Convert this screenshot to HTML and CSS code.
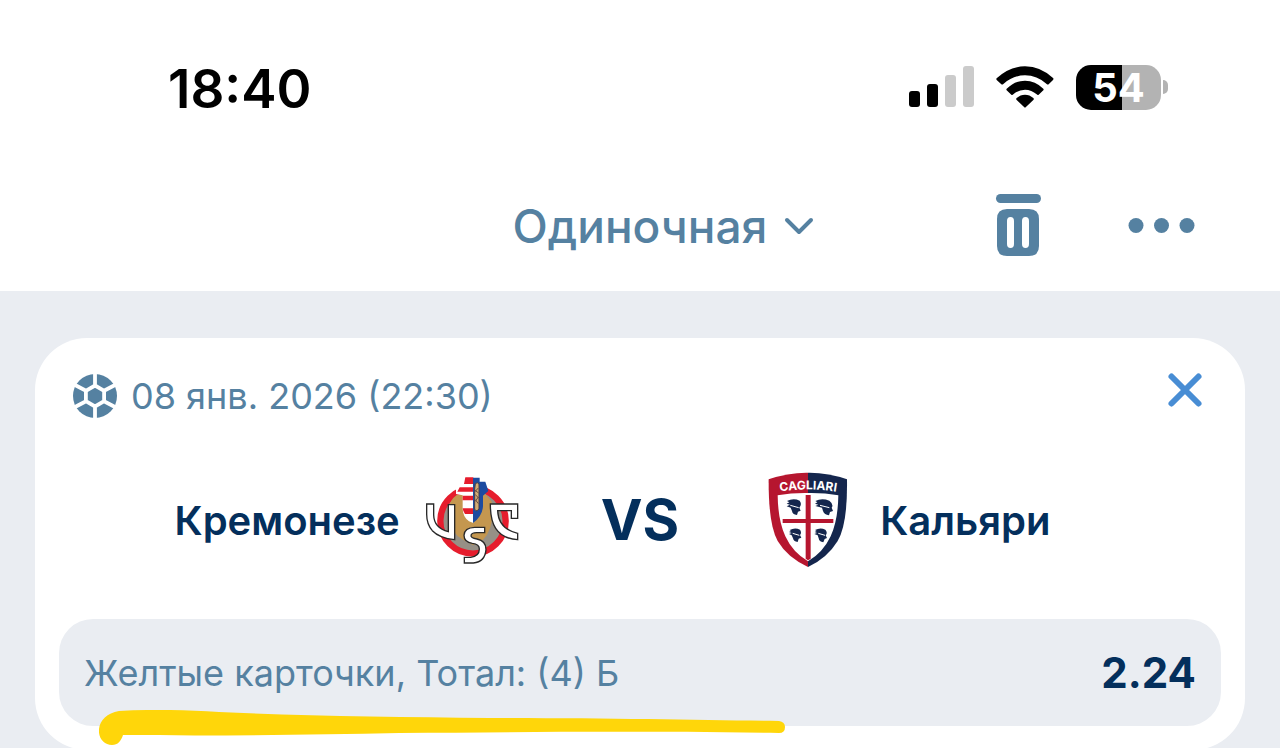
FILE: index.html
```html
<!DOCTYPE html>
<html lang="ru">
<head>
  <meta charset="UTF-8" />
  <meta name="viewport" content="width=device-width, initial-scale=1.0"/>
  <title>Купон</title>
  <link rel="stylesheet" href="styles.css">
</head>
<body>
  <div class="status-bar">
    <time class="clock">18:40</time>
    <div class="status-icons">
      <svg class="signal" width="66" height="42" viewBox="0 0 66 42">
        <rect x="1" y="25" width="11" height="16" rx="3"/>
        <rect x="19" y="18" width="11" height="23" rx="3"/>
        <rect x="37" y="9" width="11" height="32" rx="3" fill="#cbcbcb"/>
        <rect x="55" y="0" width="11" height="41" rx="3" fill="#cbcbcb"/>
      </svg>
      <svg class="wifi" width="58" height="42" viewBox="318 42 174 126">
        <path d="M320 79Q358 43 405 43Q452 43 490 79Q491 82 489 84L476 97Q473 99 470 96Q441 70 405 70Q369 70 340 96Q337 99 334 97L320 84Q318 81 320 79Z"/>
        <path d="M350 110Q374 86 405 86Q436 86 460 110Q462 113 460 115L446 128Q443 130 440 127Q425 113 405 113Q385 113 370 127Q367 130 364 128L350 115Q348 113 350 110Z"/>
        <path d="M380 138Q391 128 405 128Q419 128 430 138Q433 141 430 144L407 166Q405 168 403 166L380 144Q377 141 380 138Z"/>
      </svg>
      <div class="battery">
        <span class="battery-level">54</span>
      </div>
    </div>
  </div>

  <header class="toolbar">
    <div class="bet-type">
      <select class="bet-select" aria-label="Тип ставки">
        <option>Одиночная</option>
        <option>Экспресс</option>
        <option>Система</option>
      </select>
      <svg class="chevron" width="30" height="18" viewBox="0 0 30 18">
        <path d="M3 3L15 15L27 3"/>
      </svg>
    </div>
    <div class="toolbar-actions">
      <button class="icon-btn" aria-label="Очистить">
        <svg width="46" height="64" viewBox="0 0 46 64" fill="#5581a1">
          <rect x="1" y="0" width="45" height="9" rx="4.5"/>
          <path fill-rule="evenodd" d="M12 15H34Q44 15 44 25V52Q44 62 34 62H12Q2 62 2 52V25Q2 15 12 15ZM15.500 23Q12 23 12 27V50Q12 54 15.500 54Q19 54 19 50V27Q19 23 15.500 23ZM30.500 23Q27 23 27 27V50Q27 54 30.500 54Q34 54 34 50V27Q34 23 30.500 23Z"/>
        </svg>
      </button>
      <button class="icon-btn" aria-label="Ещё">
        <svg width="68" height="16" viewBox="0 0 68 16" fill="#5581a1">
          <circle cx="9" cy="7.500" r="7.5"/>
          <circle cx="34.500" cy="7.500" r="7.5"/>
          <circle cx="60" cy="7.500" r="7.5"/>
        </svg>
      </button>
    </div>
  </header>

  <main class="slip">
    <article class="card">
      <div class="card-head">
        <svg class="ball" width="44" height="44" viewBox="-22 -22 44 44">
          <circle r="22" fill="#5581a1"/>
          <path d="M0 -10.5L9.1 -5.2V5.2L0 10.5L-9.1 5.2V-5.2ZM0 -11V-23M9.5 -5.5L20 -11M9.5 5.5L20 11M0 11V23M-9.5 5.5L-20 11M-9.5 -5.5L-20 -11" fill="none" stroke="#fff" stroke-width="3.8"/>
        </svg>
        <time class="date">08 янв. 2026 (22:30)</time>
        <button class="icon-btn close-btn" aria-label="Удалить">
          <svg width="36" height="36" viewBox="0 0 36 36">
            <path d="M4.500 4.500L31.500 31.500M31.500 4.500L4.500 31.500" stroke="#488dd4" stroke-width="6" stroke-linecap="round"/>
          </svg>
        </button>
      </div>

      <div class="match">
        <div class="team home">
          <span>Кремонезе</span>
          <svg class="crest" width="96" height="96" viewBox="48 37 288 288">
            <circle cx="192" cy="184" r="98" fill="#969086"/>
            <circle cx="192" cy="184" r="98" fill="none" stroke="#e61d2d" stroke-width="19"/>
            <path d="M144 105Q112 128 118 172Q126 222 162 240L192 256L222 240Q258 205 248 126L230 104Z" fill="#c4974f"/>
            <path d="M165 50H193V190L180 185Q160 170 161 143V107L141 103V87L157 75Z" fill="#fff"/>
            <path d="M169 53H193V73H165ZM152 83H193V96H145ZM161 108H193V122H161ZM161 146H193V163H168Q162 156 161 146Z" fill="#e61d2d"/>
            <path d="M192 54H212V66H229L238 94L222 108V140Q220 170 192 190Z" fill="#1c4ba0"/>
            <path d="M199 72Q205 66 210 73V148Q204 158 197 150V88Z" fill="#d4ad72" stroke="#443c49" stroke-width="3"/>
            <path d="M198 92L209 100M198 104L209 115M208 85L198 96M199 120L208 132M208 112L199 125" stroke="#694d44" stroke-width="3"/>
            <g fill="#fff" stroke="#292929" stroke-width="4">
              <path d="M53 133H74V166Q75 205 118 216V135H137V240Q91 235 70 213Q53 194 53 164Z"/>
              <path d="M244 133H326V176H307V153H266Q268 207 326 221V240Q280 237 260 206Q244 182 244 133Z"/>
              <path d="M227 203H197Q166 204 165 227Q165 248 190 251Q211 253 211 268Q211 290 185 293H166V310H193Q228 307 231 270Q232 244 204 238Q185 235 186 228Q187 219 203 219H227Z"/>
            </g>
          </svg>
        </div>
        <strong class="versus">VS</strong>
        <div class="team away">
          <svg class="crest" width="96" height="96" viewBox="24 36 288 288">
            <path d="M53 58Q113 37 171 38V321Q109 292 80 243Q52 193 53 58Z" fill="#b6162f"/>
            <path d="M171 38Q230 37 288 58Q290 193 260 243Q229 294 171 321Z" fill="#14264d"/>
            <path d="M80 106Q125 98 171 99Q218 98 262 106Q261 181 239 229Q216 278 171 304Q125 277 103 229Q81 181 80 106Z" fill="#fff"/>
            <path d="M164 105H179V177H247V189H179V296L171 301L164 296V189H95V177H164Z" fill="#b6162f"/>
            <path id="crest-arc" d="M66 99Q171 77 277 99" fill="none"/>
            <text class="crest-name"><textPath href="#crest-arc" startOffset="50%" text-anchor="middle">CAGLIARI</textPath></text>
            <g fill="#14264d">
              <path d="M108 123Q127 113 146 122Q154 133 145 143L149 152L141 155L138 165Q124 163 123 153L119 143L107 139L117 134L107 131L115 127Z"/>
              <path d="M193 123Q212 113 235 122Q249 133 242 143L246 153L237 156L234 166Q220 164 216 153L213 143L193 138L202 134L192 131L199 127Z"/>
              <path d="M116 210Q132 201 147 209Q153 218 147 225L151 233L143 236L140 246Q127 244 126 235L122 226L114 222L122 219L114 216L120 213Z"/>
              <path d="M192 210Q208 201 223 209Q231 218 224 226L228 234L221 237L217 247Q204 245 203 235L200 226L190 222L198 219L191 216L197 213Z"/>
            </g>
            <path d="M118 136L143 143M207 136L235 143M125 220L145 226M202 220L222 226" stroke="#fff" stroke-width="3"/>
          </svg>
          <span>Кальяри</span>
        </div>
      </div>

      <div class="market">
        <span class="market-name">Желтые карточки, Тотал: (4) Б</span>
        <strong class="odds">2.24</strong>
        <svg class="marker" width="688" height="38" viewBox="0 0 688 38">
          <path d="M0 19C1 10 8 3 20 1C55 -1 88 0 120 2C200 6 300 7 390 8C510 8 600 10 680 11Q686 12 686 17Q686 23 680 23C540 21 430 22 300 23C210 25 110 26 24 25C22 31 19 35 13 35C5 35 -1 28 0 19Z" fill="#ffd60a"/>
        </svg>
      </div>
    </article>
  </main>
</body>
</html>
```
FILE: styles.css
```css
* {
  box-sizing: border-box;
}

body {
  margin: 0;
  min-height: 100vh;
  display: flex;
  flex-direction: column;
  font-family: Inter, "Liberation Sans", sans-serif;
  background: #fff;
  color: #5581a1;
  overflow-x: hidden;
}

button,
select {
  font-family: inherit;
  color: inherit;
  background: none;
  border: none;
  padding: 0;
  cursor: pointer;
}

svg {
  display: block;
  flex-shrink: 0;
}

/* Phone status bar */
.status-bar {
  display: flex;
  justify-content: space-between;
  align-items: center;
  padding: 61px 112px 48px 168px;
}

.clock {
  padding-top: 4px;
  font-size: 53px;
  line-height: 48px;
  font-weight: 600;
  color: #000;
}

.status-icons {
  display: flex;
  align-items: center;
  gap: 22px;
}

.battery {
  display: flex;
  align-items: center;
  gap: 2px;
}

.battery::after {
  content: "";
  width: 5px;
  height: 14px;
  border-radius: 0 6px 6px 0;
  background: #b3b3b3;
}

.battery-level {
  width: 85px;
  border-radius: 15px;
  background: linear-gradient(to right, #000 54%, #b3b3b3 54%);
  color: #fff;
  font-size: 40px;
  line-height: 45px;
  font-weight: 700;
  text-align: center;
}

/* Toolbar */
.toolbar {
  display: grid;
  grid-template-columns: 1fr auto 1fr;
  align-items: center;
  height: 130px;
  padding: 0 85px;
}

.bet-type {
  grid-column: 2;
  position: relative;
}

.bet-select {
  appearance: none;
  padding: 0 46px;
  font-size: 46px;
  line-height: 60px;
  font-weight: 500;
}

.chevron {
  position: absolute;
  right: 0;
  top: 50%;
  transform: translateY(-50%);
  pointer-events: none;
  fill: none;
  stroke: #5581a1;
  stroke-width: 4;
  stroke-linecap: round;
  stroke-linejoin: round;
}

.toolbar-actions {
  display: flex;
  justify-content: flex-end;
  align-items: center;
  gap: 86px;
}

/* Bet slip */
.slip {
  flex: 1;
  padding: 47px 35px 0;
  background: #eaedf2;
}

.card {
  padding: 34px 24px 24px;
  border-radius: 52px;
  background: #fff;
}

.card-head {
  display: flex;
  align-items: center;
  gap: 14px;
  padding: 0 18px 0 14px;
}

.date,
.market-name {
  font-size: 36px;
  line-height: 48px;
  font-weight: 400;
}

.close-btn {
  margin-left: auto;
  align-self: flex-start;
}

.match {
  display: grid;
  grid-template-columns: 1fr auto 1fr;
  align-items: center;
  gap: 80px;
  margin: 52px 0 51px;
  color: #042f5c;
}

.team {
  display: flex;
  align-items: center;
  gap: 25px;
  font-size: 40px;
  font-weight: 600;
}

.home {
  justify-content: flex-end;
}

.versus {
  font-size: 56px;
  line-height: 64px;
  font-weight: 700;
}

.crest-name {
  font-size: 36px;
  font-weight: 700;
  fill: #fff;
}

.market {
  position: relative;
  display: flex;
  justify-content: space-between;
  align-items: center;
  padding: 30px 25px 29px;
  border-radius: 34px;
  background: #eaedf2;
}

.odds {
  font-size: 42px;
  line-height: 48px;
  font-weight: 700;
  color: #042f5c;
}

/* hand-drawn highlight under the market name */
.marker {
  position: absolute;
  left: 40px;
  top: 91px;
  pointer-events: none;
}
```
